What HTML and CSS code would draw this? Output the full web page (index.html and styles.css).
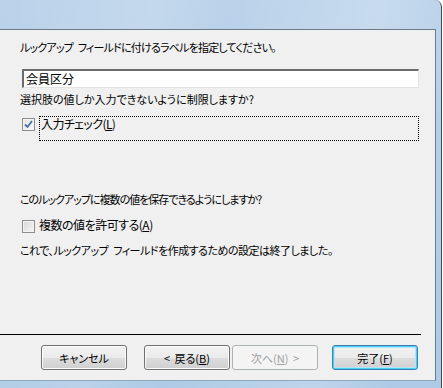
FILE: index.html
```html
<!DOCTYPE html>
<html lang="ja">
<head>
    <meta charset="UTF-8">
    <title>ルックアップ ウィザード</title>
    <link rel="stylesheet" href="styles.css">
</head>
<body>
    <div class="window">
        <div class="client">
            <div class="body">
                <p class="prompt">ルックアップ フィールドに付けるラベルを指定してください。</p>
                <div class="textbox">会員区分</div>
                <p class="question">選択肢の値しか入力できないように制限しますか?</p>
                <div class="check-row">
                    <span class="box checked">
                        <svg width="9" height="9" viewBox="0 0 9 9"><path d="M1 4.5 L3.5 7 L8 1" fill="none" stroke="#4a6fa8" stroke-width="1.8"/></svg>
                    </span>
                    <span class="focus-label">入力チェック(<u>L</u>)</span>
                </div>
                <p class="question multi">このルックアップに複数の値を保存できるようにしますか?</p>
                <div class="check-row plain">
                    <span class="box"></span>
                    <span class="label">複数の値を許可する(<u>A</u>)</span>
                </div>
                <p class="question done">これで、ルックアップ フィールドを作成するための設定は終了しました。</p>
            </div>
            <div class="footer">
                <hr class="divider">
                <div class="buttons">
                    <button class="btn">キャンセル</button>
                    <button class="btn back">&lt; 戻る(<u>B</u>)</button>
                    <button class="btn" disabled>次へ(<u>N</u>) &gt;</button>
                    <button class="btn default">完了(<u>F</u>)</button>
                </div>
            </div>
        </div>
    </div>
</body>
</html>
```

FILE: styles.css
```css
body {
    margin: 0;
    padding: 0;
    background: #ffffff;
    font-family: "Noto Sans CJK JP", "Noto Sans", sans-serif;
    font-size: 11px;
    font-feature-settings: "palt";
    color: #000;
}

.window {
    width: 442px;
    height: 388px;
    padding-top: 29px;
    box-sizing: border-box;
    border-right: 1px solid #3c4a5a;
    border-top-right-radius: 7px;
    background:
        linear-gradient(100deg, rgba(255,255,255,0) 0%, rgba(255,255,255,0.15) 30%, rgba(255,255,255,0) 45%, rgba(255,255,255,0.2) 75%, rgba(255,255,255,0) 90%),
        linear-gradient(180deg, #bad2ea 0%, #aecae6 100%);
}

.client {
    width: 436px;
    height: 352px;
    box-sizing: border-box;
    background: #f0f0f0;
    border-top: 1px solid #6d7a88;
    border-right: 1px solid #6d7a88;
    border-bottom: 1px solid #8fa6bd;
    display: flex;
    flex-direction: column;
}

.body {
    flex: 1;
    padding: 0 16px 0 20px;
}

p {
    margin: 0;
    line-height: 14px;
}

.prompt {
    margin-top: 10px;
    letter-spacing: -0.8px;
    word-spacing: 3px;
}

.textbox {
    margin: 15px 0 0 2px;
    height: 19px;
    width: 397px;
    box-sizing: border-box;
    background: #fff;
    border-top: 2px solid #6b6b6b;
    border-left: 2px solid #6b6b6b;
    border-right: 1px solid #e3e3e3;
    border-bottom: 1px solid #e3e3e3;
    padding-left: 2px;
    font-size: 12px;
    line-height: 15px;
}

.question {
    margin-top: 4px;
}

.check-row {
    display: flex;
    align-items: flex-start;
    margin-top: 10px;
    margin-left: 2px;
}

.box {
    width: 11px;
    height: 11px;
    margin-top: 2px;
    border: 1px solid #8c8c8c;
    background: linear-gradient(135deg, #d8d8d8, #f6f6f6);
    box-shadow: inset 0 0 0 1px #f4f4f4;
    display: flex;
    align-items: center;
    justify-content: center;
}

.box.checked {
    background: linear-gradient(135deg, #e4e4e4, #f8f8f8);
}

.focus-label {
    margin-left: 4px;
    width: 380px;
    height: 25px;
    box-sizing: border-box;
    border: 1px dotted #000;
    padding-left: 1px;
    font-size: 12px;
    line-height: 14px;
    letter-spacing: -0.6px;
}

.label {
    margin-left: 4px;
    font-size: 12px;
    line-height: 14px;
    letter-spacing: -0.5px;
}

.multi {
    margin-top: 51px;
    letter-spacing: -1px;
}

.plain {
    margin-top: 12px;
}

.done {
    margin-top: 10px;
    letter-spacing: -0.5px;
    word-spacing: 3px;
}

.footer {
    padding-bottom: 10px;
}

.divider {
    margin: 0 14px 0 0;
    border: 0;
    border-top: 1px solid #000;
}

.buttons {
    display: flex;
    margin-top: 10px;
    padding-left: 41px;
}

.btn {
    width: 86px;
    height: 25px;
    border: 1px solid #707070;
    border-radius: 3px;
    background: linear-gradient(180deg, #f2f2f2 0%, #ebebeb 50%, #dddddd 51%, #cfcfcf 100%);
    box-shadow: inset 0 0 0 1px #fcfcfc;
    font-family: inherit;
    font-size: 11px;
    font-feature-settings: "palt";
    word-spacing: 2px;
    color: #000;
    padding: 0;
}

.back {
    margin-left: 17px;
}

.btn[disabled] {
    margin-left: 2px;
    border-color: #adb2b5;
    background: #f4f4f4;
    box-shadow: none;
    color: #a0a0a0;
}

.default {
    margin-left: 14px;
    border-color: #3c7fb1;
    box-shadow: inset 0 0 0 1px #48d1f7, inset 0 0 0 2px #b5e4f6;
}
```
